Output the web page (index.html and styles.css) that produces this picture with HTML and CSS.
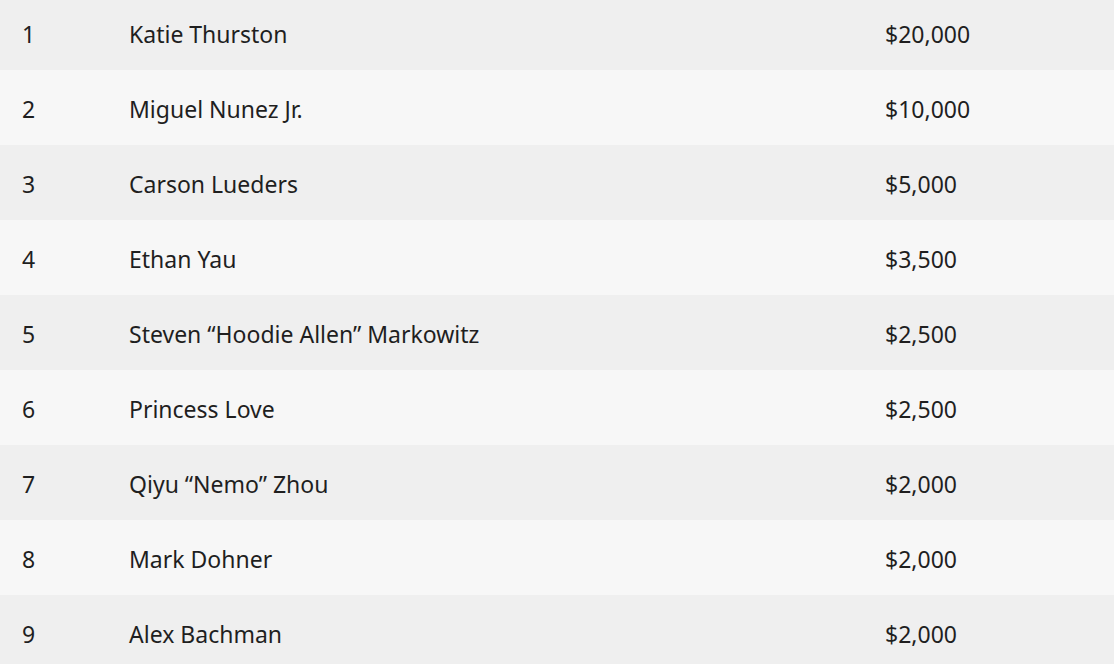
FILE: index.html
```html
<!DOCTYPE html>
<html lang="en">
<head>
<meta charset="utf-8">
<title>Results</title>
<link rel="stylesheet" href="styles.css">
</head>
<body>
<table class="results">
  <colgroup>
    <col class="col-place">
    <col class="col-name">
    <col class="col-prize">
  </colgroup>
  <tbody>
    <tr class="odd"><td class="place">1</td><td class="name">Katie Thurston</td><td class="prize">$20,000</td></tr>
    <tr class="even"><td class="place">2</td><td class="name">Miguel Nunez Jr.</td><td class="prize">$10,000</td></tr>
    <tr class="odd"><td class="place">3</td><td class="name">Carson Lueders</td><td class="prize">$5,000</td></tr>
    <tr class="even"><td class="place">4</td><td class="name">Ethan Yau</td><td class="prize">$3,500</td></tr>
    <tr class="odd"><td class="place">5</td><td class="name">Steven “Hoodie Allen” Markowitz</td><td class="prize">$2,500</td></tr>
    <tr class="even"><td class="place">6</td><td class="name">Princess Love</td><td class="prize">$2,500</td></tr>
    <tr class="odd"><td class="place">7</td><td class="name">Qiyu “Nemo” Zhou</td><td class="prize">$2,000</td></tr>
    <tr class="even"><td class="place">8</td><td class="name">Mark Dohner</td><td class="prize">$2,000</td></tr>
    <tr class="odd"><td class="place">9</td><td class="name">Alex Bachman</td><td class="prize">$2,000</td></tr>
  </tbody>
</table>
</body>
</html>
```
FILE: styles.css
```css
html, body {
  margin: 0;
  padding: 0;
  background: #f7f7f7;
  overflow: hidden;
}
.results {
  width: 1114px;
  border-collapse: collapse;
  margin-top: -5px;
  table-layout: fixed;
  font-family: "Noto Sans", "Open Sans", sans-serif;
  font-size: 23px;
  color: #1f1f1f;
}
.col-place { width: 129px; }
.col-name { width: 756px; }
.results tr {
  height: 75px;
}
.results tr.odd { background: #efefef; }
.results tr.even { background: #f7f7f7; }
.results td {
  padding: 2px 0 0 0;
  vertical-align: middle;
  white-space: nowrap;
}
.results td.place { padding-left: 22px; }
```
